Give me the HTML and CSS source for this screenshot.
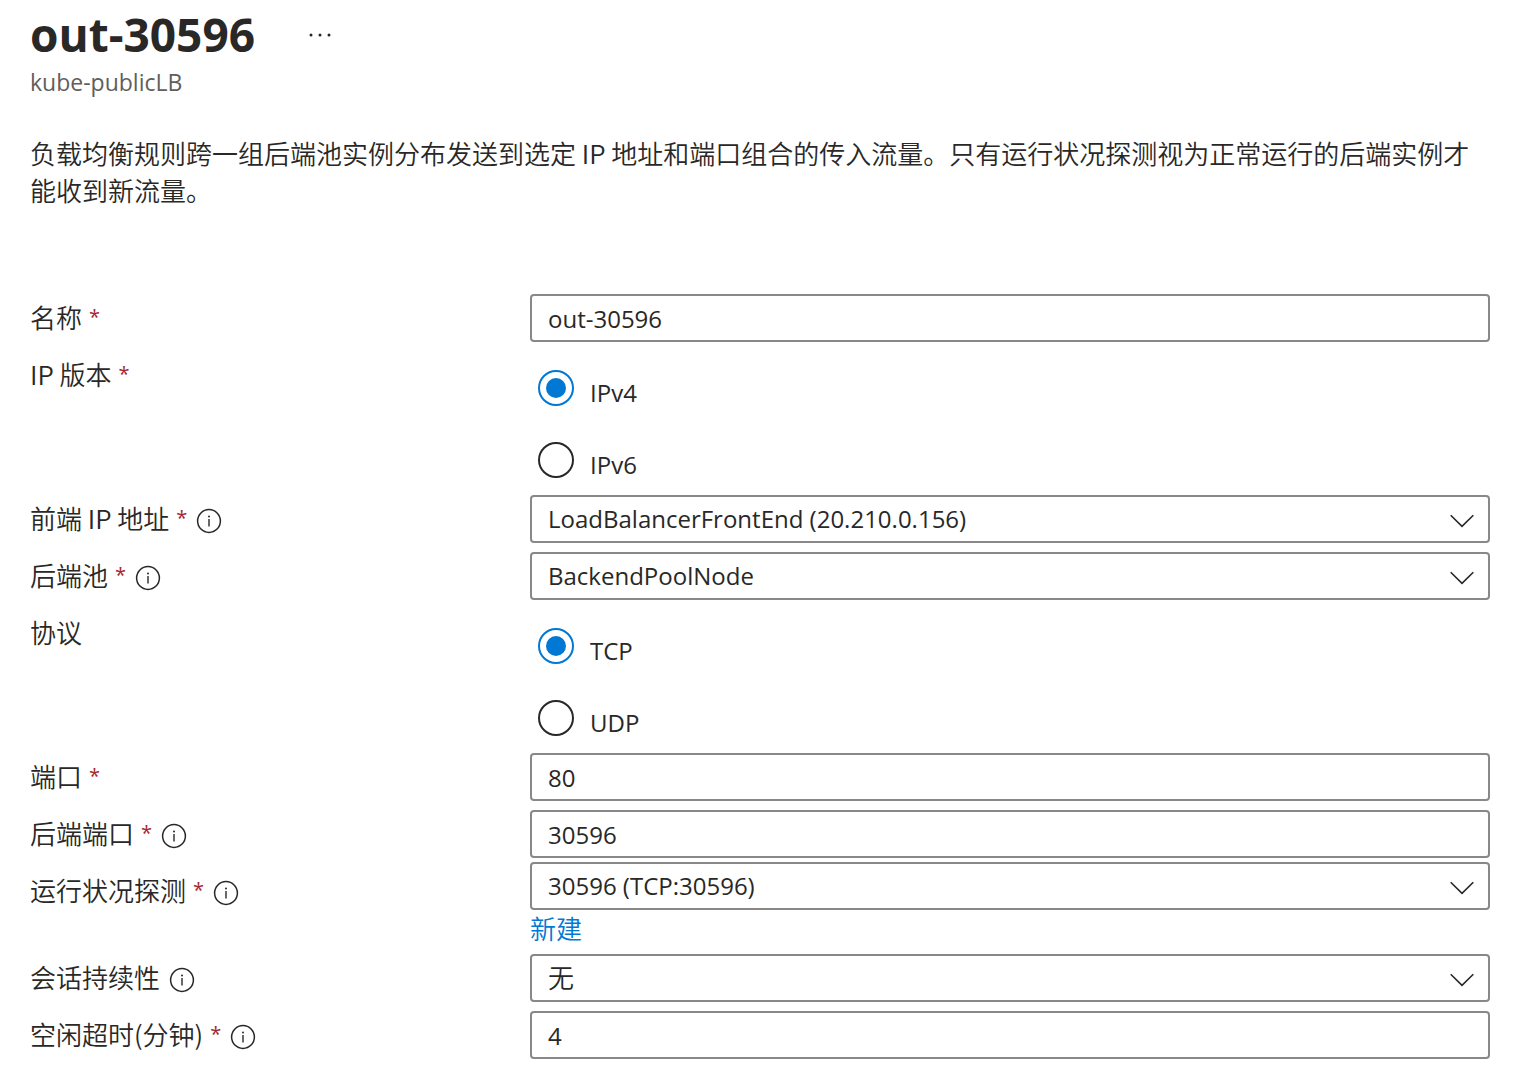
FILE: index.html
```html
<!DOCTYPE html>
<html lang="zh-CN">
<head>
<meta charset="utf-8">
<meta name="viewport" content="width=device-width, initial-scale=1">
<title>out-30596</title>
<link rel="stylesheet" href="styles.css">
</head>
<body>
<svg class="sprite" aria-hidden="true">
  <symbol id="info" viewBox="0 0 26 26">
    <circle cx="13" cy="13" r="11.4" fill="none" stroke="currentColor" stroke-width="1.5"/>
    <circle cx="13" cy="8.4" r="1" fill="currentColor"/>
    <path d="M13 11v7.4" fill="none" stroke="currentColor" stroke-width="1.4"/>
  </symbol>
  <symbol id="chevron" viewBox="0 0 24 14">
    <path d="M.7 1.2 12 12.4 23.3 1.2" fill="none" stroke="currentColor" stroke-width="1.6"/>
  </symbol>
</svg>
<main class="blade">
  <header class="header">
    <div class="title-row">
      <h1 class="title">out-30596</h1>
      <button class="more" type="button" aria-label="更多">
        <svg width="22" height="4" viewBox="0 0 22 4" fill="currentColor"><circle cx="2" cy="2" r="1.5"/><circle cx="11" cy="2" r="1.5"/><circle cx="20" cy="2" r="1.5"/></svg>
      </button>
    </div>
    <p class="subtitle">kube-publicLB</p>
  </header>
  <p class="description">负载均衡规则跨一组后端池实例分布发送到选定 IP 地址和端口组合的传入流量。只有运行状况探测视为正常运行的后端实例才能收到新流量。</p>
  <form class="form">
    <div class="row">
      <div class="label"><label for="name">名称</label><span class="required">*</span></div>
      <input class="box" id="name" type="text" value="out-30596">
    </div>
    <div class="row" role="radiogroup" aria-labelledby="ip-version">
      <div class="label"><span id="ip-version">IP 版本</span><span class="required">*</span></div>
      <div class="radios">
        <label class="option"><input class="radio" type="radio" name="ip" checked><span class="option-text">IPv4</span></label>
        <label class="option"><input class="radio" type="radio" name="ip"><span class="option-text">IPv6</span></label>
      </div>
    </div>
    <div class="row">
      <div class="label"><label for="frontend">前端 IP 地址</label><span class="required">*</span><svg class="info"><use href="#info"/></svg></div>
      <div class="dropdown"><select class="box" id="frontend"><option>LoadBalancerFrontEnd (20.210.0.156)</option></select><svg class="chevron"><use href="#chevron"/></svg></div>
    </div>
    <div class="row">
      <div class="label"><label for="pool">后端池</label><span class="required">*</span><svg class="info"><use href="#info"/></svg></div>
      <div class="dropdown"><select class="box" id="pool"><option>BackendPoolNode</option></select><svg class="chevron"><use href="#chevron"/></svg></div>
    </div>
    <div class="row" role="radiogroup" aria-labelledby="protocol">
      <div class="label"><span id="protocol">协议</span></div>
      <div class="radios">
        <label class="option"><input class="radio" type="radio" name="protocol" checked><span class="option-text">TCP</span></label>
        <label class="option"><input class="radio" type="radio" name="protocol"><span class="option-text">UDP</span></label>
      </div>
    </div>
    <div class="row">
      <div class="label"><label for="port">端口</label><span class="required">*</span></div>
      <input class="box" id="port" type="text" value="80">
    </div>
    <div class="row">
      <div class="label"><label for="backend-port">后端端口</label><span class="required">*</span><svg class="info"><use href="#info"/></svg></div>
      <input class="box" id="backend-port" type="text" value="30596">
    </div>
    <div class="row">
      <div class="label"><label for="probe">运行状况探测</label><span class="required">*</span><svg class="info"><use href="#info"/></svg></div>
      <div class="probe">
        <div class="dropdown"><select class="box" id="probe"><option>30596 (TCP:30596)</option></select><svg class="chevron"><use href="#chevron"/></svg></div>
        <a class="create" href="#new-probe">新建</a>
      </div>
    </div>
    <div class="row">
      <div class="label"><label for="session">会话持续性</label><svg class="info"><use href="#info"/></svg></div>
      <div class="dropdown"><select class="box box-cjk" id="session"><option>无</option></select><svg class="chevron"><use href="#chevron"/></svg></div>
    </div>
    <div class="row">
      <div class="label"><label for="idle">空闲超时(分钟)</label><span class="required">*</span><svg class="info"><use href="#info"/></svg></div>
      <input class="box" id="idle" type="text" value="4">
    </div>
  </form>
</main>
</body>
</html>
```
FILE: styles.css
```css
* { box-sizing: border-box; }
body {
  margin: 0;
  background: #fff;
  color: #292827;
  font-family: "Open Sans", "Noto Sans CJK SC", sans-serif;
  font-size: 26px;
  line-height: 36px;
}
.sprite { display: none; }
.blade { padding: 3px 46px 12px 30px; }
.title-row { display: flex; align-items: center; gap: 54px; }
.title { margin: 0; font-size: 46px; font-weight: 700; line-height: 62px; }
.more {
  display: flex;
  padding: 10px 0 8px;
  border: 0;
  background: none;
  color: inherit;
}
.subtitle { margin: 0; color: #605e5c; font-size: 23px; line-height: 34px; }
.description {
  margin: 35px 0 86px;
  font-family: "Noto Sans CJK SC", sans-serif;
  font-weight: 350;
  line-height: 37px;
}
.form { display: flex; flex-direction: column; gap: 9px; }
.row { display: grid; grid-template-columns: 500px minmax(0, 1fr); align-items: start; }
.label {
  display: flex;
  align-items: center;
  height: 46px;
  font-family: "Noto Sans CJK SC", sans-serif;
  font-weight: 350;
}
.required { margin-left: 7px; color: #a4262c; font-family: "Open Sans", sans-serif; font-size: 20px; font-weight: 400; }
.info { width: 26px; height: 26px; margin: 5px 0 0 9px; }
.box {
  width: 100%;
  height: 48px;
  padding: 0 16px;
  border: 2px solid #8a8886;
  border-radius: 4px;
  background: #fff;
  color: #292827;
  font-family: "Open Sans", "Noto Sans CJK SC", sans-serif;
  font-size: 24px;
  appearance: none;
}
select.box { padding-bottom: 2px; }
select.box-cjk { padding-bottom: 4px; font-size: 26px; font-weight: 350; font-family: "Noto Sans CJK SC", sans-serif; }
.dropdown { display: grid; align-items: center; }
.dropdown > * { grid-area: 1 / 1; }
.chevron {
  justify-self: end;
  width: 24px;
  height: 14px;
  margin: 4px 16px 0 0;
  pointer-events: none;
}
.radios { padding: 9px 8px 0; height: 135px; }
.option { display: flex; align-items: center; gap: 16px; height: 72px; padding-bottom: 17px; }
.radio {
  flex: none;
  display: grid;
  place-content: center;
  width: 36px;
  height: 36px;
  margin: 0;
  border: 2px solid #292827;
  border-radius: 50%;
  appearance: none;
}
.radio:checked { border-color: #0078d4; }
.radio:checked::before {
  content: "";
  width: 20px;
  height: 20px;
  border-radius: 50%;
  background: #0078d4;
}
.option-text { padding-top: 10px; font-size: 24px; }
.probe { margin-top: -5px; height: 83px; }
.create { display: block; width: max-content; color: #0078d4; font-family: "Noto Sans CJK SC", sans-serif; font-weight: 350; line-height: 36px; text-decoration: none; }
```
